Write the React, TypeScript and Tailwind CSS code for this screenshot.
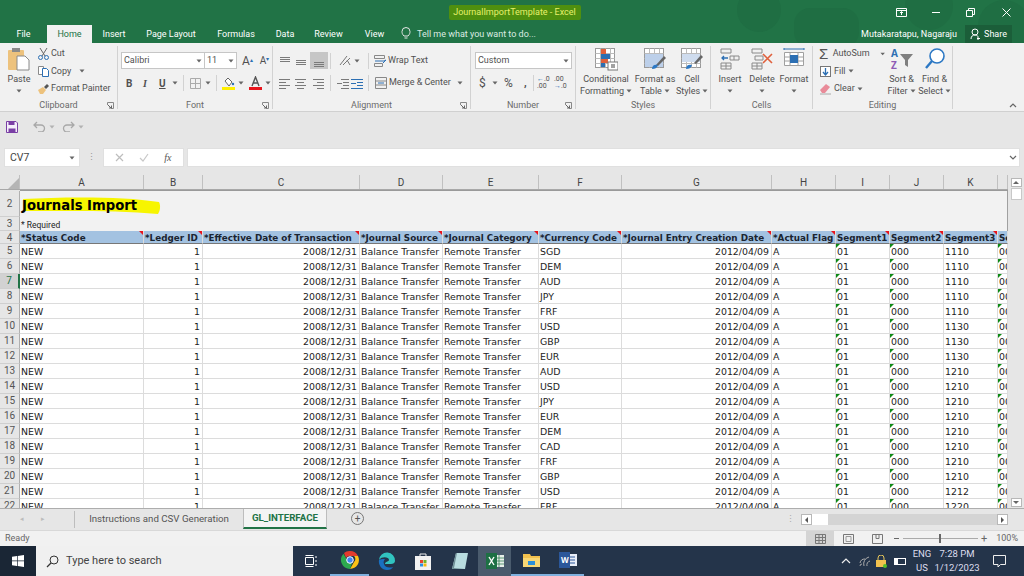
import React from "react";

const currencies = ["SGD", "DEM", "AUD", "JPY", "FRF", "USD", "GBP", "EUR", "AUD", "USD", "JPY", "EUR", "DEM", "CAD", "FRF", "GBP", "USD", "FRF"];
const seg3 = ["1110", "1110", "1110", "1110", "1110", "1130", "1130", "1130", "1210", "1210", "1210", "1210", "1210", "1210", "1210", "1210", "1212", "1220"];
const cols = ["A", "B", "C", "D", "E", "F", "G", "H", "I", "J", "K", ""];
const colW = [124, 59, 157, 83, 96, 83, 150, 64, 54, 54, 54, 10];
const heads = ["*Status Code", "*Ledger ID", "*Effective Date of Transaction", "*Journal Source", "*Journal Category", "*Currency Code", "*Journal Entry Creation Date", "*Actual Flag", "Segment1", "Segment2", "Segment3", "Se"];

function Caret({ className = "" }: { className?: string }) {
  return (
    <svg width="6" height="4" viewBox="0 0 6 4" className={className}>
      <path d="M0.5 0.5h5L3 3.5z" fill="#666" />
    </svg>
  );
}

function Lines({ rows, color = "#7a7a7a" }: { rows: number[][]; color?: string }) {
  return (
    <svg width="14" height="12" viewBox="0 0 14 12">
      {rows.map((r, i) => (
        <path key={i} d={`M${r[0]} ${r[2] + 0.5}H${r[1]}`} stroke={color} strokeWidth="1" />
      ))}
    </svg>
  );
}

function Launcher() {
  return (
    <svg width="7" height="7" viewBox="0 0 7 7" className="absolute right-[3px] bottom-[0px]">
      <path d="M0.5 3V0.5H6.5V6.5H4" fill="none" stroke="#888" />
      <path d="M1 3L4 6M2 6h2.5V3.5" fill="none" stroke="#666" />
    </svg>
  );
}

function Group({ w, label, launcher, children }: { w: number; label: string; launcher?: boolean; children: React.ReactNode }) {
  return (
    <div style={{ width: w }} className="relative flex flex-col h-[63px] mt-[3px] border-r border-[#d2d2d2] shrink-0">
      <div className="h-[53px] shrink-0 flex">{children}</div>
      <div className="text-center text-[9px] leading-[13px] text-[#6a6a6a]">{label}</div>
      {launcher && <Launcher />}
    </div>
  );
}

function BigBtn({ w, icon, l1, l2, caret2 }: { w: number; icon: React.ReactNode; l1: string; l2?: string; caret2?: boolean }) {
  return (
    <div style={{ width: w }} className="flex flex-col items-center text-[9px] leading-[12px] text-[#505050] shrink-0">
      <div className="h-[26px] flex items-center justify-center">{icon}</div>
      <div className="mt-[1px] whitespace-nowrap">{l1}</div>
      <div className="flex items-center gap-[2px] h-[12px] whitespace-nowrap">
        {l2}
        {caret2 && <Caret />}
      </div>
    </div>
  );
}

function Sep() {
  return <div className="w-px h-[16px] bg-[#d2d2d2] shrink-0" />;
}

function GridIcon({ children }: { children?: React.ReactNode }) {
  return (
    <svg width="24" height="24" viewBox="0 0 24 24">
      <rect x="1.5" y="1.5" width="19" height="19" fill="#fff" stroke="#9a9a9a" />
      <path d="M1.5 6.5h19M1.5 11.5h19M1.5 16.5h19M6.5 1.5v19M11.5 1.5v19M16.5 1.5v19" stroke="#bbb" />
      {children}
    </svg>
  );
}

function Ribbon() {
  return (
    <div className="h-[69px] bg-[#f1f1f1] flex border-b border-[#d0d0d0] shrink-0">
      <Group w={118} label="Clipboard" launcher>
        <div className="w-[38px] pl-[1px]">
          <BigBtn
            w={36}
            l1="Paste"
            caret2
            icon={
              <svg width="24" height="25" viewBox="0 0 24 25">
                <rect x="1" y="3" width="16" height="20" rx="1" fill="#edc27d" />
                <rect x="5" y="1" width="8" height="4" fill="#8a8a8a" />
                <path d="M10 9h8l4 4v10H10z" fill="#fff" stroke="#8a8a8a" />
              </svg>
            }
          />
        </div>
        <div className="flex flex-col text-[9px] text-[#505050] leading-[17.5px] whitespace-nowrap -mt-[1px]">
          <div className="flex items-center gap-[2px]">
            <svg width="11" height="12" viewBox="0 0 11 12">
              <path d="M2 0l5 8M9 0L4 8" stroke="#666" />
              <circle cx="2.5" cy="9.5" r="2" fill="none" stroke="#2c6fb3" />
              <circle cx="8.5" cy="9.5" r="2" fill="none" stroke="#2c6fb3" />
            </svg>
            Cut
          </div>
          <div className="flex items-center gap-[2px]">
            <svg width="11" height="12" viewBox="0 0 11 12">
              <path d="M0.5 1.5h5v8h-5z" fill="#fff" stroke="#8a8a8a" />
              <path d="M4.5 3.5h4l2 2v6h-6z" fill="#fff" stroke="#2c6fb3" />
            </svg>
            Copy
            <Caret className="ml-[6px]" />
          </div>
          <div className="flex items-center gap-[2px]">
            <svg width="11" height="12" viewBox="0 0 11 12">
              <path d="M0 7l5-3 3 3-3 4H2z" fill="#edc27d" />
              <path d="M6 4l3-3 2 2-3 3z" fill="#555" />
            </svg>
            Format Painter
          </div>
        </div>
      </Group>

      <Group w={155} label="Font" launcher>
        <div className="pl-[3px] pt-[6px] flex flex-col gap-[6px] text-[#505050]">
          <div className="flex items-center h-[17px]">
            <div className="w-[84px] h-[17px] bg-white border border-[#c6c6c6] flex items-center justify-between px-[2px] text-[9px]">
              Calibri
              <Caret />
            </div>
            <div className="w-[32px] h-[17px] bg-white border border-[#c6c6c6] border-l-0 flex items-center justify-between px-[2px] text-[9px]">
              11
              <Caret />
            </div>
            <span className="ml-[5px] text-[12px] leading-none">
              A<sup className="text-[#2c6fb3] text-[6px]">▴</sup>
            </span>
            <span className="ml-[7px] text-[10px] leading-none">
              A<sup className="text-[#2c6fb3] text-[6px]">▾</sup>
            </span>
          </div>
          <div className="flex items-center h-[16px] text-[10px] pl-[5px]">
            <span className="w-[17px] font-bold">B</span>
            <span className="w-[16px] font-bold italic font-['Liberation_Serif',serif]">I</span>
            <span className="w-[13px] font-bold underline">U</span>
            <Caret className="mr-[5px]" />
            <Sep />
            <svg width="11" height="11" viewBox="0 0 11 11" className="ml-[6px] mr-[4px]">
              <path d="M.5.5h10v10H.5zM5.5.5v10M.5 5.5h10" fill="none" stroke="#aaa" />
            </svg>
            <Caret className="mr-[5px]" />
            <Sep />
            <svg width="13" height="14" viewBox="0 0 13 14" className="ml-[5px] mr-[3px]">
              <path d="M3 5l3-3 4 4-3 4z" fill="#fff" stroke="#666" />
              <circle cx="11" cy="8" r="1.2" fill="#2c6fb3" />
              <rect x="0" y="11" width="13" height="3" fill="#ffef00" />
            </svg>
            <Caret className="mr-[5px]" />
            <svg width="13" height="14" viewBox="0 0 13 14" className="mr-[3px]">
              <path d="M3 10L6.5 1 10 10M4.5 7h4" fill="none" stroke="#555" strokeWidth="1.4" />
              <rect x="0" y="11" width="13" height="3" fill="#e8141c" />
            </svg>
            <Caret />
          </div>
        </div>
      </Group>

      <Group w={198} label="Alignment" launcher>
        <div className="pl-[5px] pt-[6px] flex flex-col gap-[6px] text-[#505050] text-[9px] w-full">
          <div className="flex items-center h-[17px]">
            <span className="w-[16px]"><Lines rows={[[2, 12, 2], [2, 12, 4], [2, 12, 6]]} /></span>
            <span className="w-[16px]"><Lines rows={[[2, 12, 5], [2, 12, 7], [2, 12, 9]]} /></span>
            <span className="w-[18px] h-[17px] bg-[#c6c6c6] flex items-center justify-center"><Lines rows={[[2, 12, 7], [2, 12, 9], [2, 12, 11]]} /></span>
            <div className="w-px h-[16px] bg-[#d2d2d2] ml-[2px] mr-[7px]" />
            <svg width="14" height="13" viewBox="0 0 14 13">
              <path d="M2 11L9 2M5 11l7-7M9 6l3 5" fill="none" stroke="#777" />
            </svg>
            <Caret className="ml-[2px]" />
            <div className="w-px h-[16px] bg-[#d2d2d2] ml-[8px] mr-[5px]" />
            <svg width="13" height="12" viewBox="0 0 13 12" className="mr-[1px]">
              <path d="M.5.5h10v3H.5zM.5 8.5h8v3H.5z" fill="none" stroke="#888" />
              <path d="M1 6h9l2-1M9 8l3-3" fill="none" stroke="#2c6fb3" />
            </svg>
            <span className="whitespace-nowrap">Wrap Text</span>
          </div>
          <div className="flex items-center h-[16px]">
            <span className="w-[16px]"><Lines rows={[[1, 12, 2], [1, 8, 5], [1, 12, 8], [1, 8, 11]]} /></span>
            <span className="w-[16px]"><Lines rows={[[1, 12, 2], [3, 10, 5], [1, 12, 8], [3, 10, 11]]} /></span>
            <span className="w-[18px] flex justify-center"><Lines rows={[[1, 12, 2], [5, 12, 5], [1, 12, 8], [5, 12, 11]]} /></span>
            <div className="w-px h-[16px] bg-[#d2d2d2] ml-[2px] mr-[5px]" />
            <Lines rows={[[5, 13, 2], [7, 13, 5], [7, 13, 8], [5, 13, 11], [1, 6, 6]]} />
            <Lines rows={[[1, 13, 2], [7, 13, 5], [7, 13, 8], [1, 13, 11], [1, 6, 6]]} color="#2c6fb3" />
            <div className="w-px h-[16px] bg-[#d2d2d2] ml-[4px] mr-[6px]" />
            <svg width="12" height="12" viewBox="0 0 12 12" className="mr-[2px]">
              <path d="M.5.5h11v11H.5zM.5 4h11M.5 8h11" fill="none" stroke="#888" />
              <path d="M3 6h6" stroke="#2c6fb3" />
            </svg>
            <span className="whitespace-nowrap">Merge &amp; Center</span>
            <Caret className="ml-[6px]" />
          </div>
        </div>
      </Group>

      <Group w={105} label="Number" launcher>
        <div className="pl-[4px] pt-[6px] flex flex-col gap-[6px] text-[#505050]">
          <div className="w-[97px] h-[17px] bg-white border border-[#c6c6c6] flex items-center justify-between px-[2px] text-[9px]">
            Custom
            <Caret />
          </div>
          <div className="flex items-center h-[16px] pl-[4px]">
            <span className="text-[12px] w-[13px]">$</span>
            <Caret className="mr-[6px]" />
            <span className="text-[12px] w-[16px]">%</span>
            <span className="text-[11px] font-bold w-[13px] pl-[4px]">,</span>
            <Sep />
            <span className="text-[7px] leading-[7px] w-[18px] pl-[3px]">
              <span className="text-[#2c6fb3]">←</span>.0
              <br />
              .00
            </span>
            <span className="text-[7px] leading-[7px] w-[16px] pl-[2px]">
              .00
              <br />
              <span className="text-[#2c6fb3]">→</span>.0
            </span>
          </div>
        </div>
      </Group>

      <Group w={135} label="Styles">
        <BigBtn
          w={60}
          l1="Conditional"
          l2="Formatting"
          caret2
          icon={
            <GridIcon>
              <rect x="7" y="2" width="5" height="5" fill="#e0603c" />
              <rect x="7" y="7" width="9" height="5" fill="#2c6fb3" />
              <rect x="7" y="12" width="7" height="4" fill="#e0603c" />
              <rect x="7" y="16" width="4" height="4" fill="#2c6fb3" />
              <rect x="14" y="15" width="10" height="8" fill="#fff" stroke="#777" />
              <path d="M17 18h4M17 20h4" stroke="#444" />
            </GridIcon>
          }
        />
        <BigBtn
          w={38}
          l1="Format as"
          l2="Table"
          caret2
          icon={
            <GridIcon>
              <rect x="2" y="7" width="18" height="13" fill="#bdd0ea" />
              <path d="M13 18l8-9 2 2-8 8z" fill="#666" />
              <path d="M9 22c0-4 3-5 6-4-1 3-3 4-6 4z" fill="#2c78c4" />
            </GridIcon>
          }
        />
        <BigBtn
          w={36}
          l1="Cell"
          l2="Styles"
          caret2
          icon={
            <GridIcon>
              <rect x="2" y="7" width="18" height="8" fill="#cfdcee" />
              <path d="M14 16l7-8 2 2-7 7z" fill="#666" />
              <path d="M6 22c0-4 3-5 6-4-1 3-3 4-6 4z" fill="#2c78c4" />
            </GridIcon>
          }
        />
      </Group>

      <Group w={102} label="Cells">
        <div className="pl-[3px] flex">
          <BigBtn
            w={32}
            l1="Insert"
            caret2
            icon={
              <svg width="22" height="22" viewBox="0 0 22 22">
                <path d="M2 1h10v4H2zM2 15h10v6H2zM7 15v6M2 18h10M11 8h9v4h-9zM15 8v4" fill="none" stroke="#8a8a8a" />
                <path d="M3 10h6M5 8l-2 2 2 2" fill="none" stroke="#2c6fb3" strokeWidth="1.3" />
              </svg>
            }
          />
          <BigBtn
            w={32}
            l1="Delete"
            caret2
            icon={
              <svg width="24" height="22" viewBox="0 0 24 22">
                <path d="M2 1h10v4H2zM2 15h10v6H2zM7 15v6M2 18h10M5 8h8v4H5z" fill="none" stroke="#8a8a8a" />
                <path d="M13 6l9 9M22 6l-9 9" stroke="#e0603c" strokeWidth="1.6" />
              </svg>
            }
          />
          <BigBtn
            w={32}
            l1="Format"
            caret2
            icon={
              <svg width="22" height="24" viewBox="0 0 22 24">
                <path d="M1.5 5.5h19v13h-19zM1.5 10h19M1.5 14h19M7 5.5v13M15 5.5v13" fill="#fff" stroke="#a0a0a0" />
                <rect x="7" y="8" width="8" height="8" fill="#2c6fb3" />
                <path d="M1 2h20M1 1v2M21 1v2" stroke="#2c6fb3" />
              </svg>
            }
          />
        </div>
      </Group>

      <Group w={140} label="Editing">
        <div className="w-[72px] pl-[6px] text-[9px] leading-[17.5px] text-[#505050] whitespace-nowrap flex flex-col -mt-[1px]">
          <div className="flex items-center gap-[2px]">
            <span className="text-[15px] leading-[17px] w-[13px] text-[#555] font-['Liberation_Sans',sans-serif]">Σ</span>
            AutoSum
            <Caret className="ml-[8px]" />
          </div>
          <div className="flex items-center gap-[2px]">
            <svg width="13" height="13" viewBox="0 0 13 13">
              <rect x="1.5" y="1.5" width="10" height="10" fill="#fff" stroke="#777" />
              <path d="M6.5 3v7M4 7l2.500 3L9 7" fill="none" stroke="#2c6fb3" strokeWidth="1.3" />
            </svg>
            Fill
            <Caret />
          </div>
          <div className="flex items-center gap-[2px]">
            <svg width="13" height="13" viewBox="0 0 13 13">
              <path d="M1 8l6-6 4 3-5 6H3z" fill="#e98b99" />
              <path d="M1 12h11" stroke="#aaa" />
            </svg>
            Clear
            <Caret />
          </div>
        </div>
        <BigBtn
          w={33}
          l1="Sort &"
          l2="Filter"
          caret2
          icon={
            <svg width="24" height="24" viewBox="0 0 24 24">
              <text x="1" y="10" fontSize="10" fill="#2c6fb3" fontWeight="700" fontFamily="Open Sans">A</text>
              <text x="1" y="22" fontSize="10" fill="#8e5bb5" fontWeight="700" fontFamily="Open Sans">Z</text>
              <path d="M10 7h13l-5 6v7l-3-2v-5z" fill="#7f7f7f" />
            </svg>
          }
        />
        <BigBtn
          w={33}
          l1="Find &"
          l2="Select"
          caret2
          icon={
            <svg width="24" height="24" viewBox="0 0 24 24">
              <circle cx="14" cy="9" r="7" fill="#fff" stroke="#2c78c4" strokeWidth="1.6" />
              <path d="M9 14l-6 7" stroke="#2c78c4" strokeWidth="2.4" />
            </svg>
          }
        />
      </Group>

      <div className="flex-1 flex items-end justify-end pr-[7px] pb-[3px]">
        <svg width="8" height="5" viewBox="0 0 8 5">
          <path d="M1 4l3-3 3 3" fill="none" stroke="#666" strokeWidth="1.2" />
        </svg>
      </div>
    </div>
  );
}

function TitleBar() {
  return (
    <div className="relative bg-[#217346] text-white shrink-0 overflow-hidden">
      <svg width="300" height="43" viewBox="0 0 300 43" className="absolute top-0 right-0">
        <circle cx="35" cy="10" r="22" fill="#1f6e43" />
        <rect x="70" y="8" width="65" height="40" rx="16" fill="#1f6e43" />
        <circle cx="205" cy="6" r="24" fill="#1f6e43" />
        <circle cx="280" cy="26" r="26" fill="#1f6e43" />
      </svg>
      <div className="relative h-[25px] flex items-center">
        <div className="flex-1 flex justify-center">
          <span className="w-[132px] ml-[5px] text-center bg-[#4f8f0f] text-[#e6f06c] text-[9px] leading-[15px] rounded-[2px] whitespace-nowrap">JournalImportTemplate - Excel</span>
        </div>
        <div className="flex items-center h-full text-white absolute right-0 top-0">
          <svg width="11" height="9" viewBox="0 0 11 9" className="mr-[25px]">
            <path d="M.5.5h10v8H.5zM.5 2.5h10M5.5 7V4M4 5l1.5-1.5L7 5" fill="none" stroke="#fff" />
          </svg>
          <div className="w-[8px] h-px bg-white mr-[26px]" />
          <svg width="9" height="9" viewBox="0 0 9 9" className="mr-[27px]">
            <path d="M.5 2.5h6v6h-6zM2.5 2.5v-2h6v6h-2" fill="none" stroke="#fff" />
          </svg>
          <svg width="9" height="9" viewBox="0 0 9 9" className="mr-[13px]">
            <path d="M.5.5l8 8M8.5.5l-8 8" stroke="#fff" />
          </svg>
        </div>
      </div>
      <div className="relative h-[18px] flex items-end text-[9px] leading-[18px]">
        <div className="w-[47px] text-center">File</div>
        <div className="w-[45px] h-[18px] text-center bg-[#f1f1f1] text-[#217346]">Home</div>
        <div className="w-[44px] text-center">Insert</div>
        <div className="w-[70px] text-center">Page Layout</div>
        <div className="w-[60px] text-center">Formulas</div>
        <div className="w-[38px] text-center">Data</div>
        <div className="w-[49px] text-center">Review</div>
        <div className="w-[43px] text-center">View</div>
        <svg width="10" height="13" viewBox="0 0 10 13" className="ml-[5px] mb-[3px]">
          <path d="M3 9C1 7 1 5.500 1 4.500a4 4 0 0 1 8 0C9 5.500 9 7 7 9zM3.500 11h3" fill="none" stroke="#e6e6e6" />
        </svg>
        <div className="ml-[6px] text-[#dcebe2]">Tell me what you want to do...</div>
        <div className="ml-auto whitespace-nowrap">Mutakaratapu, Nagaraju</div>
        <div className="ml-[8px] mr-[12px] w-[47px] h-[18px] bg-[#1b5e39] flex items-center justify-center gap-[3px]">
          <svg width="11" height="12" viewBox="0 0 11 12">
            <circle cx="5" cy="4" r="3" fill="none" stroke="#fff" />
            <path d="M1 11c0-3 2-4 4-4s3 1 3 2M8 9v3M7 10.500h3" fill="none" stroke="#fff" />
          </svg>
          Share
        </div>
      </div>
    </div>
  );
}

function ToolBars() {
  return (
    <div className="bg-[#e6e6e6] h-[63px] shrink-0 flex flex-col">
      <div className="h-[35px] flex items-center pl-[6px] pb-[6px] gap-[15px]">
        <svg width="12" height="12" viewBox="0 0 12 12">
          <path d="M.5.5h9.500l1.500 1.500v9.500H.5z" fill="#f4eefa" stroke="#7a3fa5" />
          <path d="M2.500.5h6v3.500h-6zM2.500 7.500h7v4h-7z" fill="#7a3fa5" />
        </svg>
        <div className="flex items-center gap-[3px]">
          <svg width="13" height="11" viewBox="0 0 13 11">
            <path d="M4 1L1 4l3 3M1 4h7a3.500 3.500 0 0 1 0 7H5" fill="none" stroke="#a8a8a8" strokeWidth="1.3" />
          </svg>
          <Caret className="opacity-40" />
        </div>
        <div className="flex items-center gap-[3px] -ml-[8px]">
          <svg width="13" height="11" viewBox="0 0 13 11">
            <path d="M9 1l3 3-3 3M12 4H5a3.500 3.500 0 0 0 0 7h3" fill="none" stroke="#a8a8a8" strokeWidth="1.3" />
          </svg>
          <Caret className="opacity-40" />
        </div>
      </div>
      <div className="h-[19px] flex items-stretch pl-[4px] pr-[4px] mt-px">
        <div className="w-[76px] bg-white flex items-center justify-between pl-[5px] pr-[4px] text-[10.5px] text-[#444] border border-[#e0e0e0]">
          CV7
          <Caret />
        </div>
        <div className="w-[23px] flex items-center justify-center text-[#999] text-[9px] tracking-tighter">⋮</div>
        <div className="w-[81px] bg-white flex items-center justify-around px-[4px] border border-[#e0e0e0]">
          <svg width="9" height="9" viewBox="0 0 9 9">
            <path d="M1 1l7 7M8 1L1 8" stroke="#bdbdbd" strokeWidth="1.2" />
          </svg>
          <svg width="10" height="9" viewBox="0 0 10 9">
            <path d="M1 5l3 3 5-7" fill="none" stroke="#c8c8c8" strokeWidth="1.2" />
          </svg>
          <span className="italic text-[10px] text-[#555] font-['Liberation_Serif',serif]">fx</span>
        </div>
        <div className="flex-1 ml-[3px] bg-white border border-[#e0e0e0] flex items-center justify-end pr-[2px]">
          <svg width="8" height="5" viewBox="0 0 8 5">
            <path d="M1 1l3 3 3-3" fill="none" stroke="#666" strokeWidth="1.2" />
          </svg>
        </div>
      </div>
    </div>
  );
}

function Cell({ w, right, tick, children }: { w: number; right?: boolean; tick?: boolean; children?: React.ReactNode }) {
  return (
    <div style={{ width: w }} className={`relative shrink-0 h-full bg-white border-r border-b border-[#dcdcdc] pl-[1px] pr-[2px] overflow-hidden whitespace-nowrap ${right ? "text-right" : ""}`}>
      {tick && <div className="absolute top-0 left-0 w-0 h-0 border-t-[4px] border-r-[4px] border-t-[#0e8a16] border-r-transparent" />}
      {children}
    </div>
  );
}

function RowHead({ n, h, selected }: { n: number | string; h: number; selected?: boolean }) {
  return (
    <div
      style={{ height: h }}
      className={`w-[20px] shrink-0 flex items-center justify-center text-[10px] font-['Roboto',sans-serif] border-b border-[#cfcfcf] border-r ${selected ? "bg-[#d2d2d2] border-r-[#217346] border-r-2 text-[#217346]" : "bg-[#e6e6e6] border-r-[#b0b0b0] text-[#555]"}`}
    >
      {n}
    </div>
  );
}

function Sheet() {
  return (
    <div className="flex-1 flex flex-col min-w-0">
      <div className="flex h-[15px] bg-[#e6e6e6] border-b border-[#a8a8a8] text-[10px] text-[#444] shrink-0">
        <div className="w-[20px] border-r border-[#c0c0c0] flex items-end justify-end">
          <div className="w-0 h-0 border-l-[11px] border-b-[11px] border-l-transparent border-b-[#b5b5b5]" />
        </div>
        {cols.map((c, i) => (
          <div key={i} style={{ width: colW[i] }} className="border-r border-[#c0c0c0] text-center leading-[15px] shrink-0">
            {c}
          </div>
        ))}
      </div>
      <div className="flex-1 overflow-hidden font-['DejaVu_Sans',sans-serif] text-[9.4px] text-[#222]">
        <div className="flex h-[1px]">
          <div className="w-[20px] bg-[#e6e6e6]" />
          <div className="flex-1 bg-[#9a9a9a]" />
        </div>
        <div className="flex">
          <div className="flex flex-col">
            <RowHead n={2} h={26} />
            <RowHead n={3} h={14} />
          </div>
          <div className="flex-1 bg-[#f2f2f2] border-r border-[#a0a0a0] flex flex-col">
            <div className="h-[26px] relative pl-[2px] pt-[3px] flex items-center">
              <svg width="140" height="20" viewBox="0 0 140 20" className="absolute left-[2px] top-[5px]">
                <path d="M1 3C40 1 100 0 137 6c2 4 1 9-1 12-40-4-90-3-134-3z" fill="#f7f500" />
              </svg>
              <span className="relative font-bold text-[13.2px] text-black">Journals Import</span>
            </div>
            <div className="h-[14px] pl-[1px] text-[8.5px] leading-[16px] font-['Roboto',sans-serif]">* Required</div>
          </div>
        </div>
        <div className="flex h-[13px]">
          <RowHead n={4} h={13} />
          {heads.map((h, i) => (
            <div key={i} style={{ width: colW[i] }} className="relative shrink-0 bg-[#a3c2e1] border-r border-[#dcdcdc] border-b border-b-[#777] pl-[1px] font-bold text-[8.8px] leading-[14px] overflow-hidden whitespace-nowrap text-[#1a2430]">
              {h}
              {i < 11 && <div className="absolute top-0 right-0 w-0 h-0 border-t-[4px] border-l-[4px] border-t-[#e8141c] border-l-transparent" />}
            </div>
          ))}
        </div>
        {currencies.map((cur, i) => (
          <div key={i} className="flex h-[15px] leading-[16px]">
            <RowHead n={i + 5} h={15} selected={i === 2} />
            <Cell w={colW[0]}>NEW</Cell>
            <Cell w={colW[1]} right>1</Cell>
            <Cell w={colW[2]} right>2008/12/31</Cell>
            <Cell w={colW[3]}>Balance Transfer</Cell>
            <Cell w={colW[4]}>Remote Transfer</Cell>
            <Cell w={colW[5]}>{cur}</Cell>
            <Cell w={colW[6]} right>2012/04/09</Cell>
            <Cell w={colW[7]}>A</Cell>
            <Cell w={colW[8]} tick>01</Cell>
            <Cell w={colW[9]} tick>000</Cell>
            <Cell w={colW[10]}>{seg3[i]}</Cell>
            <Cell w={colW[11]} tick>00</Cell>
          </div>
        ))}
      </div>
    </div>
  );
}

function VScroll() {
  return (
    <div className="w-[16px] shrink-0 bg-[#e6e6e6] flex flex-col items-center pt-[3px] pb-px">
      <div className="w-[11px] h-[9px] bg-white border border-[#b8b8b8] flex items-center justify-center">
        <div className="w-0 h-0 border-x-[3px] border-b-[3px] border-x-transparent border-b-[#666]" />
      </div>
      <div className="w-[11px] h-[12px] mt-px bg-white border border-[#c8c8c8]" />
      <div className="flex-1" />
      <div className="w-[11px] h-[9px] bg-white border border-[#b8b8b8] flex items-center justify-center">
        <div className="w-0 h-0 border-x-[3px] border-t-[3px] border-x-transparent border-t-[#666]" />
      </div>
    </div>
  );
}

function TabStrip() {
  return (
    <div className="h-[22px] shrink-0 bg-[#e6e6e6] border-t border-[#adadad] flex text-[9.7px]">
      <div className="w-[75px] border-r border-[#bdbdbd] my-[2px] flex items-center pl-[20px] gap-[17px] text-[#bcbcbc] text-[7px]">
        <span>◂</span>
        <span>▸</span>
      </div>
      <div className="w-[168px] h-[21px] flex items-center justify-center text-[#555]">Instructions and CSV Generation</div>
      <div className="w-[84px] h-[20px] bg-[#f4f4f4] border-x border-[#bdbdbd] border-b-2 border-b-[#217346] font-bold text-[#217346] flex items-center justify-center">GL_INTERFACE</div>
      <div className="w-[13px] h-[13px] ml-[24px] mt-[3px] rounded-full border border-[#777] text-[#555] flex items-center justify-center text-[10px] leading-none">+</div>
      <div className="flex-1 flex justify-end items-center pr-[16px]">
        <span className="text-[#aaa] text-[9px] mr-[6px]">⋮</span>
        <div className="w-[207px] h-[11px] bg-[#d4d4d4] flex items-center justify-between">
          <div className="flex">
            <div className="w-[11px] h-[11px] bg-white border border-[#b8b8b8] flex items-center justify-center">
              <div className="w-0 h-0 border-y-[3px] border-r-[3px] border-y-transparent border-r-[#555]" />
            </div>
            <div className="w-[16px] h-[11px] bg-white" />
          </div>
          <div className="w-[11px] h-[11px] bg-white border border-[#b8b8b8] flex items-center justify-center">
            <div className="w-0 h-0 border-y-[3px] border-l-[3px] border-y-transparent border-l-[#555]" />
          </div>
        </div>
      </div>
    </div>
  );
}

function StatusBar() {
  return (
    <div className="h-[16px] shrink-0 bg-[#f1f1f1] border-t border-[#d8d8d8] flex items-center text-[9px] text-[#666]">
      <span className="pl-[5px]">Ready</span>
      <div className="ml-auto w-[28px] h-full bg-[#d4d4d4] flex items-center justify-center">
        <svg width="11" height="10" viewBox="0 0 11 10">
          <path d="M.5.500h10v9H.5zM4 .500v9M7.500 .500v9M.5 3.500h10M.5 6.500h10" fill="none" stroke="#777" />
        </svg>
      </div>
      <svg width="11" height="10" viewBox="0 0 11 10" className="ml-[9px]">
        <path d="M.5.500h10v9H.5z" fill="none" stroke="#777" />
        <path d="M3 2.500h5v5H3z" fill="none" stroke="#999" />
      </svg>
      <svg width="11" height="10" viewBox="0 0 11 10" className="ml-[18px]">
        <path d="M.5.500v9h10v-9M4 .500v4h3v-4M.5 .500h10" fill="none" stroke="#777" />
      </svg>
      <span className="ml-[11px] w-[5px] h-px bg-[#666]" />
      <div className="relative w-[75px] h-px bg-[#aaa] ml-[4px] mr-[3px]">
        <div className="absolute left-[36px] top-[-4px] w-[2px] h-[9px] bg-[#666]" />
      </div>
      <span className="text-[11px] leading-none w-[8px]">+</span>
      <span className="ml-[7px] mr-[6px] w-[22px] text-right">100%</span>
    </div>
  );
}

function Taskbar() {
  return (
    <div className="h-[30px] shrink-0 bg-[#24344a] flex items-center text-white relative">
      <div className="w-[36px] h-full flex items-center justify-center bg-[#1a2635]">
        <svg width="12" height="12" viewBox="0 0 12 12">
          <path d="M0 1.700L5 1v4.600H0zM5.700 .900L12 0v5.600H5.700zM0 6.300h5V11L0 10.300zM5.700 6.300H12V12l-6.300-.9z" fill="#fff" />
        </svg>
      </div>
      <div className="w-[257px] h-full bg-[#f0f0f0] flex items-center pl-[10px] gap-[7px] text-[11px] text-[#444]">
        <svg width="13" height="13" viewBox="0 0 13 13">
          <circle cx="8" cy="5" r="4" fill="none" stroke="#333" />
          <path d="M5 8l-4 4" stroke="#333" strokeWidth="1.2" />
        </svg>
        Type here to search
      </div>
      <div className="w-[36px] flex justify-center">
        <svg width="13" height="12" viewBox="0 0 13 12">
          <path d="M.5 2.500h8v7h-8zM.5.500h8M.5 11.500h8M11 1v2M11 5v2M11 9v2" fill="none" stroke="#fff" />
        </svg>
      </div>
      <div className="w-[39px] h-full flex items-center justify-center border-b-2 border-[#7fb0de] ml-[1px]">
        <svg width="18" height="18" viewBox="0 0 18 18">
          <path d="M9 0a9 9 0 0 1 8 5H9a4 4 0 0 0-4 2L3 2a9 9 0 0 1 6-2z" fill="#e33b2e" />
          <path d="M17 5a9 9 0 0 1-8 13l4-7a4 4 0 0 0 0-6z" fill="#fbc116" />
          <path d="M2.500 2.800L6 9a4 4 0 0 0 5 3l-2 6A9 9 0 0 1 2.500 2.800z" fill="#2da94f" />
          <circle cx="9" cy="9" r="3.300" fill="#4285f4" stroke="#fff" />
        </svg>
      </div>
      <div className="w-[36px] flex justify-center">
        <svg width="18" height="18" viewBox="0 0 18 18">
          <path d="M1 8a8 8 0 0 1 16 1c0 2-2 3-4 3H7c0-3 4-2 4-4 0-3-7-4-10 0z" fill="#31c4c0" />
          <path d="M1 8c-1 5 3 10 8 10 3 0 5-1 6-3-3 1-8 1-9-3-1-2 0-4 1-5-3 0-5 0-6 1z" fill="#1a6fc0" />
        </svg>
      </div>
      <div className="w-[36px] flex justify-center">
        <svg width="18" height="18" viewBox="0 0 18 18">
          <path d="M6 4V2h6v2" fill="none" stroke="#eee" />
          <rect x="1" y="4" width="16" height="14" fill="#f2f2f2" />
          <rect x="6" y="8" width="3" height="3" fill="#e8432f" />
          <rect x="9.500" y="8" width="3" height="3" fill="#6fb52c" />
          <rect x="6" y="11.500" width="3" height="3" fill="#2c8fe0" />
          <rect x="9.500" y="11.500" width="3" height="3" fill="#f5b90f" />
        </svg>
      </div>
      <div className="w-[37px] flex justify-center">
        <svg width="18" height="18" viewBox="0 0 18 18">
          <path d="M5 1h12l-3 16H1z" fill="#b8dce0" />
          <path d="M1 17l4-16 1 0-3 15 11 1z" fill="#6f8f96" />
        </svg>
      </div>
      <div className="w-[33px] h-full bg-[#4a5b6d] flex items-center justify-center">
        <svg width="18" height="16" viewBox="0 0 18 16">
          <rect x="8" y="2" width="10" height="12" fill="#e8f0ea" />
          <path d="M8 5h10M8 8h10M8 11h10M13 2v12" stroke="#217346" strokeWidth=".7" />
          <rect x="0" y="0" width="11" height="16" fill="#1d7044" />
          <path d="M3 4l5 8M8 4l-5 8" stroke="#fff" strokeWidth="1.4" />
        </svg>
      </div>
      <div className="w-[41px] h-full flex items-center justify-center border-b-2 border-[#7fb0de]">
        <svg width="17" height="14" viewBox="0 0 17 14">
          <path d="M0 1h7l1 2h9v11H0z" fill="#f2c14e" />
          <rect x="0" y="5" width="17" height="9" fill="#f8d775" />
          <rect x="5" y="8" width="7" height="4" fill="#2c8fd8" />
        </svg>
      </div>
      <div className="w-[32px] h-full flex items-center justify-center border-b-2 border-[#7fb0de]">
        <svg width="18" height="16" viewBox="0 0 18 16">
          <rect x="7" y="2" width="11" height="12" fill="#e8eef8" />
          <path d="M10 5h6M10 8h6M10 11h6" stroke="#2b579a" />
          <rect x="0" y="0" width="11" height="16" fill="#2b579a" />
          <text x="2" y="11" fontSize="8" fontWeight="700" fill="#fff" fontFamily="Open Sans">W</text>
        </svg>
      </div>
      <div className="ml-auto flex items-center h-full">
        <svg width="10" height="6" viewBox="0 0 10 6" className="mr-[8px]">
          <path d="M1 5l4-4 4 4" fill="none" stroke="#eee" strokeWidth="1.2" />
        </svg>
        <svg width="12" height="11" viewBox="0 0 12 11" className="mr-[4px]">
          <path d="M1 10a2 2 0 0 1 2-2M1 7a5 5 0 0 1 5-4M5 10a7 7 0 0 1 5-9M8 10a4 4 0 0 1 3-5" fill="none" stroke="#aaa" />
        </svg>
        <svg width="12" height="13" viewBox="0 0 12 13" className="mr-[7px]">
          <path d="M3 6V3a3 3 0 0 1 6 0v3" fill="none" stroke="#e8c65a" />
          <rect x="1" y="5" width="10" height="7" fill="#f2c14e" />
          <circle cx="10" cy="11" r="2" fill="#55c02a" />
        </svg>
        <div className="w-[12px] h-[7px] border border-white mr-[4px] flex">
          <div className="w-[3px] bg-white" />
        </div>
        <div className="w-[24px] text-center text-[9.5px] leading-[14px] text-[#dde]">
          ENG
          <br />
          US
        </div>
        <div className="w-[46px] text-center text-[9.5px] leading-[14px] text-[#dde] whitespace-nowrap">
          7:28 PM
          <br />
          1/12/2023
        </div>
        <svg width="13" height="13" viewBox="0 0 13 13" className="ml-[13px] mr-[18px]">
          <path d="M.5.500h12v9H7.500L5 12V9.500H.5z" fill="none" stroke="#eee" />
        </svg>
      </div>
    </div>
  );
}

export default function App() {
  return (
    <div className="w-[1024px] h-[576px] flex flex-col overflow-hidden bg-[#e6e6e6] font-['Roboto',sans-serif]">
      <TitleBar />
      <Ribbon />
      <ToolBars />
      <div className="flex flex-1 min-h-0">
        <Sheet />
        <VScroll />
      </div>
      <TabStrip />
      <StatusBar />
      <Taskbar />
    </div>
  );
}
